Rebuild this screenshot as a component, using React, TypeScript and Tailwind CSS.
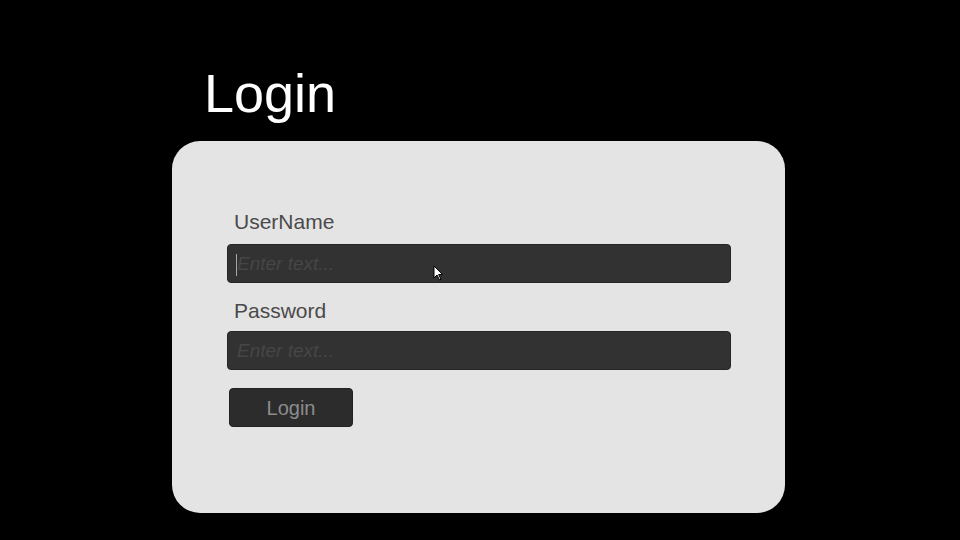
import React from "react";

function Field({ label, caret, tight }: { label: string; caret?: boolean; tight?: boolean }) {
  return (
    <div>
      <div className="pl-[7px] text-[21px] leading-none text-[#4a4a4a]">{label}</div>
      <div
        className={
          "relative flex h-[39px] w-[504px] items-center rounded-[4px] border border-[#262626] bg-[#323232] pl-[9px] " +
          (tight ? "mt-[10px]" : "mt-[12px]")
        }
      >
        {caret ? <span className="absolute left-[8px] top-[9px] h-[22px] w-px bg-[#a8a8a8]" /> : null}
        <span className="text-[19px] italic leading-none text-[#464646]">Enter text...</span>
      </div>
    </div>
  );
}

export default function App() {
  return (
    <div className="relative h-[540px] w-[960px] overflow-hidden bg-black font-['Liberation_Sans',Arial,sans-serif]">
      <div className="pl-[204px] pt-[66px] text-[54px] leading-none text-white">Login</div>
      <div className="ml-[172px] mt-[21px] h-[372px] w-[613px] rounded-[28px] bg-[#e4e4e4] pl-[55px] pt-[70px]">
        <Field label="UserName" caret />
        <div className="mt-[17px]">
          <Field label="Password" tight />
        </div>
        <button className="ml-[2px] mt-[18px] flex h-[39px] w-[124px] items-center justify-center rounded-[4px] border border-[#222] bg-[#2c2c2c] text-[20px] leading-none text-[#8c8c8c]">
          Login
        </button>
      </div>
      <svg className="absolute left-[433px] top-[265px]" width="11" height="16" viewBox="0 0 11 16">
        <path d="M1 1 L1 13 L4 10 L6.5 15 L8 14.3 L5.6 9.5 L9.6 9.5 Z" fill="#fff" stroke="#000" strokeWidth="1" />
      </svg>
    </div>
  );
}
